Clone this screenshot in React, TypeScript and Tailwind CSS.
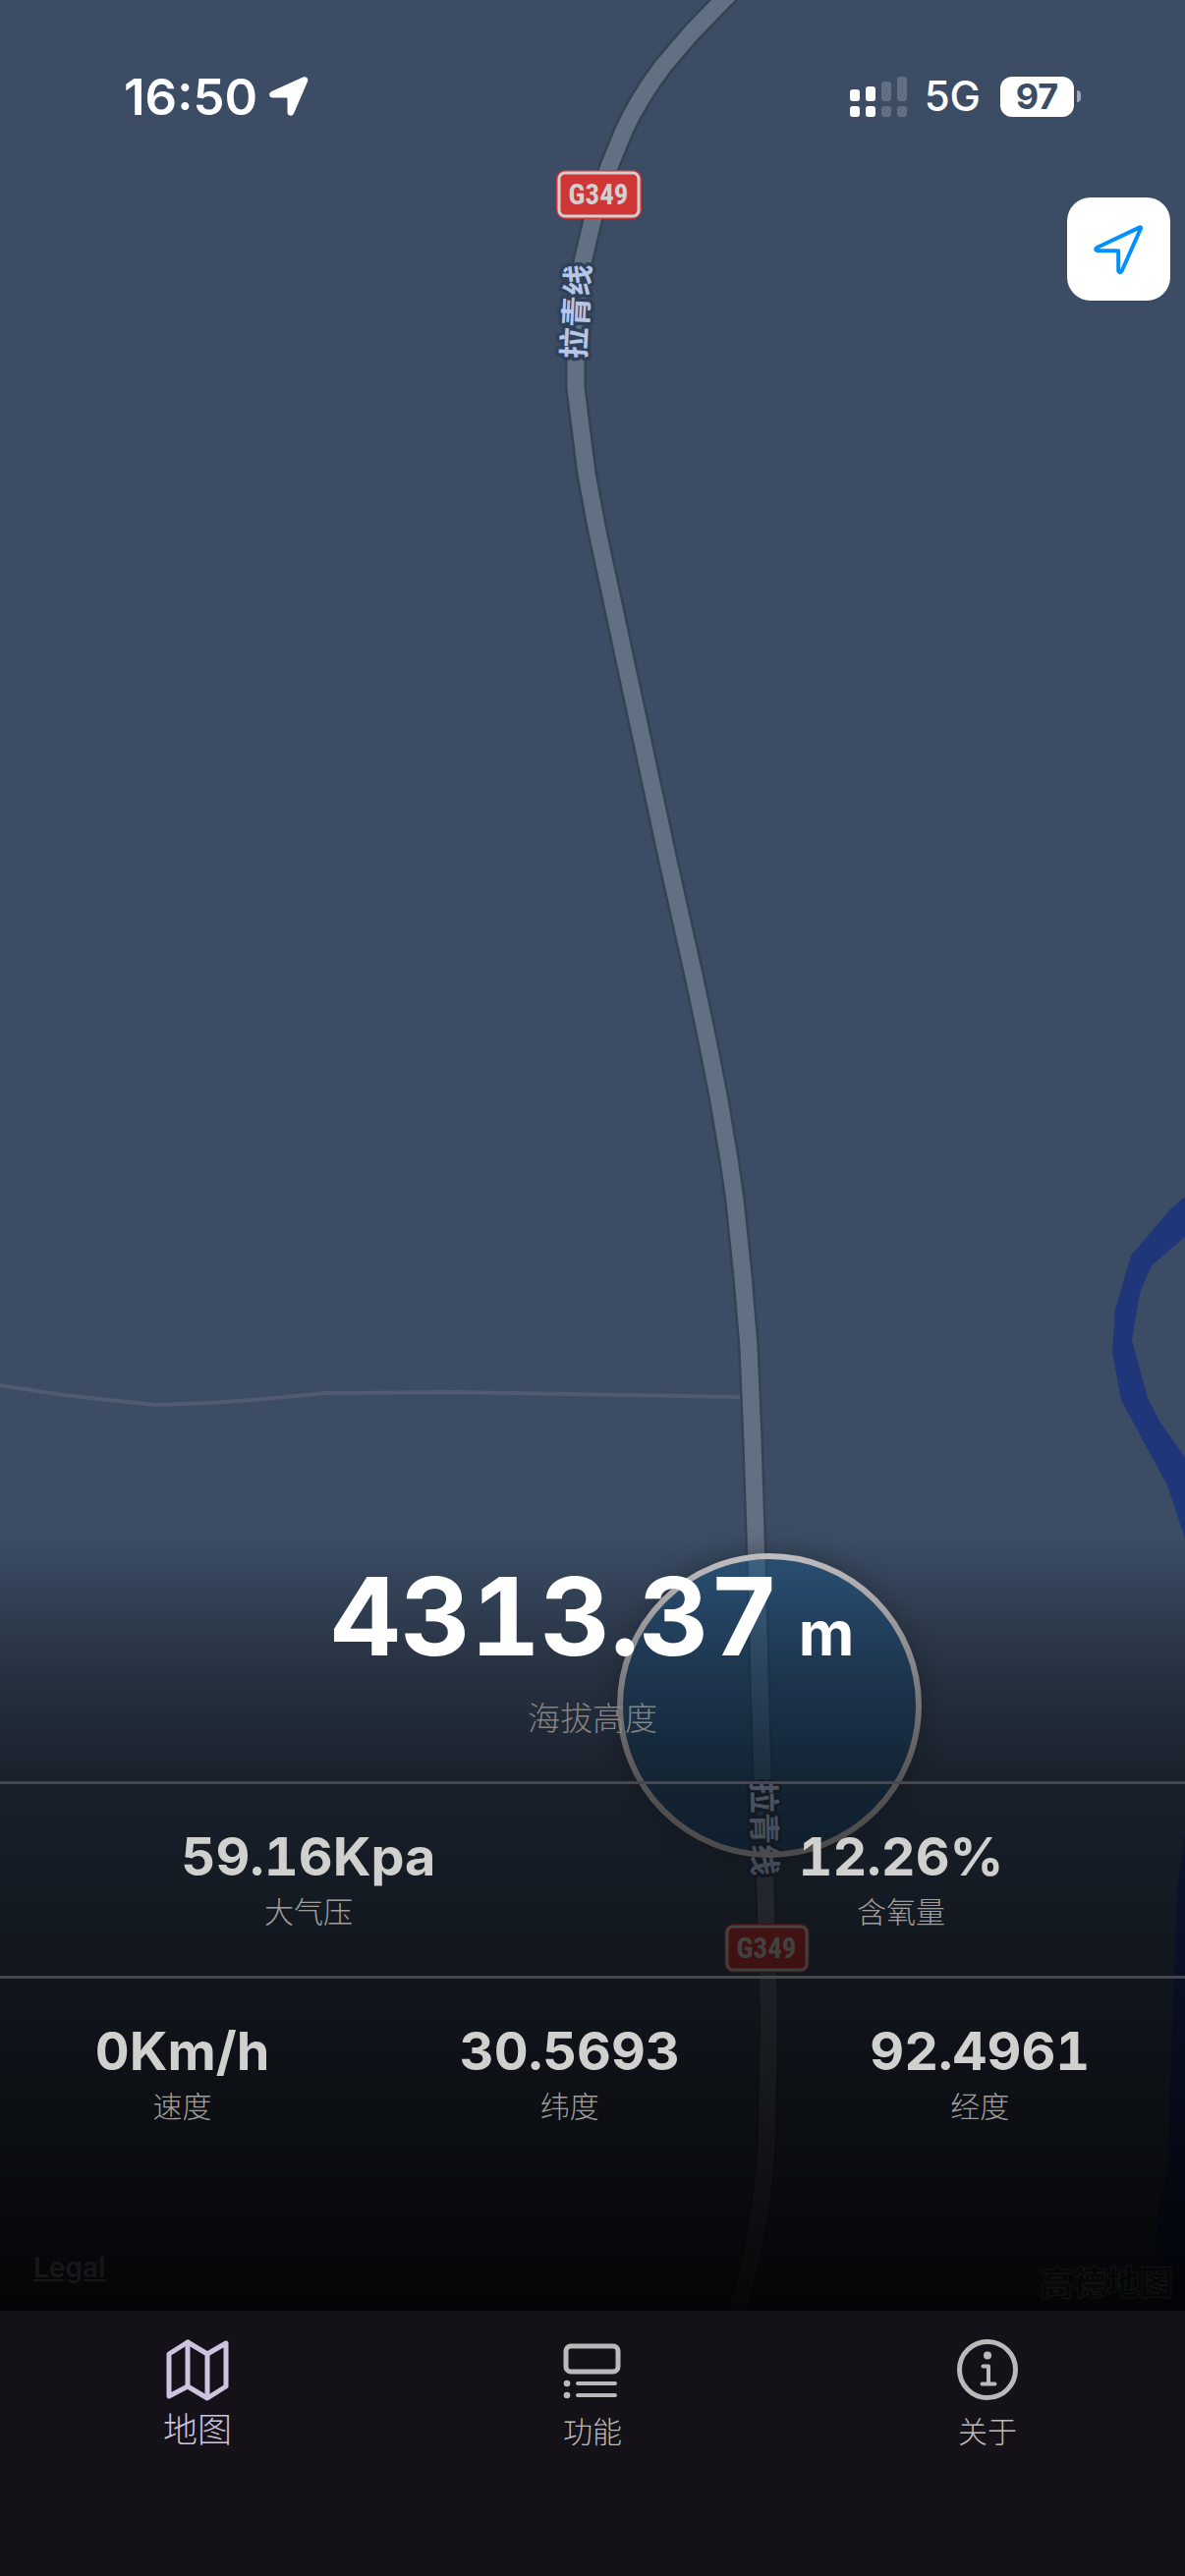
import React from 'react';

interface Reading {
  value: string;
  label: string;
}

interface TabItem {
  id: string;
  label: string;
  icon: React.ReactNode;
}

const airReadings: Reading[] = [
  { value: '59.16Kpa', label: '大气压' },
  { value: '12.26%', label: '含氧量' },
];

const positionReadings: Reading[] = [
  { value: '0Km/h', label: '速度' },
  { value: '30.5693', label: '纬度' },
  { value: '92.4961', label: '经度' },
];

const ROAD =
  'M756 -20 L736 0 L704 33 L675 67 Q650 100 635 133 L621 167 Q608 200 601 233 L593 267 Q586 320 586 367 L586 395 L597 482 L607 536 L679 872 L707 997 L720 1059 L731 1115 L742 1180 L748 1222 L756 1299 L762 1371 L766 1467 L769 1560 L773 1707 L776 1807 L779 1923 L781 1997 Q783 2045 782 2090 L780 2187 Q776 2240 768 2280 Q760 2320 750 2354';

const MapIcon: React.FC = () => (
  <svg
    className="w-[72px] h-[72px]"
    viewBox="0 0 72 72"
    fill="none"
    stroke="currentColor"
    strokeWidth={5}
    strokeLinejoin="round"
    strokeLinecap="round"
  >
    <path d="M7 20 L26 8 L46 20 L65 9 V53 L46 65 L26 53 L7 63 Z" />
    <path d="M26 8 V53 M46 20 V64" />
  </svg>
);

const FeatureIcon: React.FC = () => (
  <svg
    className="w-[72px] h-[72px]"
    viewBox="0 0 72 72"
    fill="none"
    stroke="currentColor"
    strokeWidth={5}
    strokeLinecap="round"
  >
    <rect x="9" y="12" width="53" height="26" rx="5" />
    <path d="M21 50 H59 M21 62 H59" strokeWidth={4} />
    <circle cx="10" cy="50" r="3.3" fill="currentColor" stroke="none" />
    <circle cx="10" cy="62" r="3.3" fill="currentColor" stroke="none" />
  </svg>
);

const InfoIcon: React.FC = () => (
  <svg
    className="w-[72px] h-[72px]"
    viewBox="0 0 72 72"
    fill="none"
    stroke="currentColor"
    strokeLinecap="round"
    strokeLinejoin="round"
  >
    <circle cx="36" cy="36" r="28.5" strokeWidth={5} />
    <circle cx="36" cy="21.5" r="4" fill="currentColor" stroke="none" />
    <path d="M31.5 32.5 H37 V50.5 M30.5 50.5 H43.5" strokeWidth={4} />
  </svg>
);

const tabs: TabItem[] = [
  { id: 'map', label: '地图', icon: <MapIcon /> },
  { id: 'feature', label: '功能', icon: <FeatureIcon /> },
  { id: 'about', label: '关于', icon: <InfoIcon /> },
];

const RoadShield: React.FC<{ x: number; y: number }> = ({ x, y }) => (
  <g transform={`translate(${x} ${y})`}>
    <rect width="87" height="50" rx="9" fill="#cf3737" />
    <rect x="3" y="3" width="81" height="44" rx="6" fill="none" stroke="#d0d0d0" strokeWidth="3" />
    <text
      x="43"
      y="35"
      textAnchor="middle"
      fill="#d0d0d0"
      className="font-['Liberation_Sans_Narrow','Roboto_Condensed',sans-serif] text-[29px] font-bold"
    >
      G349
    </text>
  </g>
);

const RoadName: React.FC<{ x: number; y: number; angle: number }> = ({ x, y, angle }) => (
  <text
    transform={`translate(${x} ${y}) rotate(${angle})`}
    textAnchor="middle"
    dominantBaseline="central"
    fill="#b7c6e6"
    stroke="#2f4058"
    strokeWidth="7"
    strokeLinejoin="round"
    paintOrder="stroke"
    className="font-['Noto_Sans_CJK_SC',sans-serif] text-[32px] font-bold"
  >
    拉青线
  </text>
);

const MapCanvas: React.FC = () => (
  <svg
    className="absolute inset-0 w-full h-full"
    viewBox="0 0 1206 2352"
    preserveAspectRatio="xMidYMid slice"
    aria-label="地图"
  >
    <defs>
      <filter id="dotShadow" x="-20%" y="-20%" width="140%" height="140%">
        <feGaussianBlur stdDeviation="14" />
      </filter>
    </defs>
    <rect width="1206" height="2352" fill="#3b4c64" />
    {/* River */}
    <path
      fill="#20367a"
      d="M1206 1218 L1191 1231 L1151 1278 L1135 1333 L1132 1376 L1141 1425 L1188 1512 L1206 1566 V1483 L1181 1448 L1168 1423 L1152 1364 L1160 1316 L1172 1288 L1206 1259 Z"
    />
    <path
      fill="#20367a"
      d="M1206 1867 L1198 1923 L1195 2010 L1189 2173 L1188 2210 L1178 2252 L1177 2352 H1206 Z"
    />
    {/* Roads */}
    <path
      d="M0 1410 L65 1420 L158 1430 L212 1428 L269 1424 L331 1418 L461 1417 L754 1422"
      fill="none"
      stroke="#515a70"
      strokeWidth="4"
    />
    <path d={ROAD} fill="none" stroke="#354252" strokeWidth="22" strokeLinejoin="round" />
    <path d={ROAD} fill="none" stroke="#627083" strokeWidth="17" strokeLinejoin="round" />
    {/* Current position */}
    <circle cx="783" cy="1736" r="156" fill="#000" opacity="0.25" filter="url(#dotShadow)" />
    <circle cx="783" cy="1736" r="152" fill="#3b4c64" />
    <path d="M770 1585 L773 1707 L776 1807 L779 1888" fill="none" stroke="#354252" strokeWidth="22" />
    <path d="M770 1585 L773 1707 L776 1807 L779 1888" fill="none" stroke="#627083" strokeWidth="17" />
    <circle cx="783" cy="1736" r="152" fill="#1a5e92" fillOpacity="0.45" />
    <RoadShield x={566} y={173} />
    <RoadName x={584} y={317} angle={-87} />
    <RoadName x={780} y={1861} angle={89} />
    <circle cx="783" cy="1736" r="152" fill="none" stroke="#c9c6ca" strokeWidth="6" />
    <RoadShield x={737} y={1958} />
  </svg>
);

const StatusBar: React.FC = () => (
  <header className="flex items-center justify-between h-[196px] pl-[126px] pr-[106px] text-white">
    <div className="flex items-center gap-3">
      <span className="text-[51px] leading-none font-semibold">16:50</span>
      <svg className="w-10 h-10" viewBox="0 0 40 40" fill="currentColor">
        <path d="M34.5 0.6 C37.5 -0.6 40.3 1.8 39 5 L25 37.5 C23.5 41 18.5 40 18.5 36.5 V22.5 C18.5 21.8 18.2 21.5 17.5 21.5 H3.5 C-0.2 21.5 -1.2 16.8 2.4 15 Z" />
      </svg>
    </div>
    <div className="flex items-center">
      <svg className="w-[58px] h-[41px]" viewBox="0 0 58 41" fill="currentColor">
        <rect x="0" y="13" width="10" height="12" rx="3" />
        <rect x="16" y="10" width="10" height="15" rx="3" />
        <rect x="32" y="5" width="10" height="20" rx="3" opacity="0.2" />
        <rect x="48" y="0" width="10" height="25" rx="3" opacity="0.2" />
        <rect x="0" y="30" width="10" height="11" rx="3" />
        <rect x="16" y="30" width="10" height="11" rx="3" />
        <rect x="32" y="30" width="10" height="11" rx="3" opacity="0.2" />
        <rect x="48" y="30" width="10" height="11" rx="3" opacity="0.2" />
      </svg>
      <span className="ml-[18px] text-[42px] leading-none font-medium">5G</span>
      <div className="ml-5 flex items-center justify-center w-[75px] h-[41px] rounded-xl bg-white text-[#3b4c64] text-[36px] leading-none font-bold">
        97
      </div>
      <span className="ml-[3px] w-1 h-3 rounded-r-full bg-white/50" />
    </div>
  </header>
);

const ReadingCell: React.FC<Reading> = ({ value, label }) => (
  <div className="flex flex-col items-center">
    <span className="text-[54px] leading-[64px] font-bold tabular-nums text-[#d0d1cf]">{value}</span>
    <span className="text-[30px] leading-[48px] font-light text-[#a09f9e]">{label}</span>
  </div>
);

const ReadingPanel: React.FC = () => (
  <section className="relative bg-[linear-gradient(to_bottom,rgba(0,0,0,0)_0%,rgba(0,0,0,0.34)_17%,rgba(0,0,0,0.58)_32%,rgba(0,0,0,0.7)_56%,rgba(0,0,0,0.94)_100%)]">
    <div className="flex flex-col items-center h-[250px] pt-4">
      <div className="flex items-baseline gap-5 text-white">
        <span className="text-[110px] leading-[132px] font-bold tabular-nums">4313.37</span>
        <span className="text-[62px] leading-none font-bold">m</span>
      </div>
      <span className="mt-[14px] text-[33px] leading-[48px] font-light text-[#868483]">海拔高度</span>
    </div>
    <div className="flex justify-around h-[198px] pt-[42px] border-t-[3px] border-[#49454f]">
      {airReadings.map((reading) => (
        <ReadingCell key={reading.label} {...reading} />
      ))}
    </div>
    <div className="flex justify-around pt-[42px] pb-[124px] border-t-[3px] border-[#49454f]">
      {positionReadings.map((reading) => (
        <ReadingCell key={reading.label} {...reading} />
      ))}
    </div>
    <div className="flex items-start justify-between h-[60px] pl-[34px] pr-3">
      <a href="#legal" className="text-[28px] leading-8 font-semibold text-[#161718] underline">
        Legal
      </a>
      <span className="pt-3 text-[34px] leading-10 font-black text-[#050606] [-webkit-text-stroke:1px_#121413]">
        高德地图
      </span>
    </div>
  </section>
);

const TabBar: React.FC<{ active: string; onChange: (id: string) => void }> = ({ active, onChange }) => (
  <nav className="flex h-[270px] items-start bg-[#141118]">
    {tabs.map((tab) => (
      <button
        key={tab.id}
        type="button"
        onClick={() => onChange(tab.id)}
        className={
          tab.id === active
            ? 'flex flex-1 flex-col items-center pt-6 text-[35px] leading-[50px] font-light text-[#cec3de]'
            : 'flex flex-1 flex-col items-center pt-6 text-[30px] leading-[54px] font-light text-[#bababb]'
        }
      >
        {tab.icon}
        {tab.label}
      </button>
    ))}
  </nav>
);

export default function App() {
  const [active, setActive] = React.useState<string>('map');

  return (
    <div className="flex flex-col min-h-screen bg-[#141118] font-['Inter','Noto_Sans_CJK_SC',sans-serif]">
      <main className="relative flex flex-1 flex-col overflow-hidden">
        <MapCanvas />
        <div className="relative flex flex-1 flex-col">
          <StatusBar />
          <div className="flex justify-end pt-[5px] pr-[15px]">
            <button
              type="button"
              aria-label="定位"
              className="flex items-center justify-center w-[105px] h-[105px] rounded-3xl bg-white text-[#0091ff]"
            >
              <svg
                className="w-[52px] h-[52px]"
                viewBox="0 0 52 52"
                fill="none"
                stroke="currentColor"
                strokeWidth={4}
                strokeLinejoin="round"
              >
                <path d="M46.4 3.6 Q48.6 2.6 47.8 5 L28.6 48 Q26 50.5 25.2 47.5 V27.2 H4 Q0.8 26 3.4 24 Z" />
              </svg>
            </button>
          </div>
        </div>
        <ReadingPanel />
      </main>
      <TabBar active={active} onChange={setActive} />
    </div>
  );
}
